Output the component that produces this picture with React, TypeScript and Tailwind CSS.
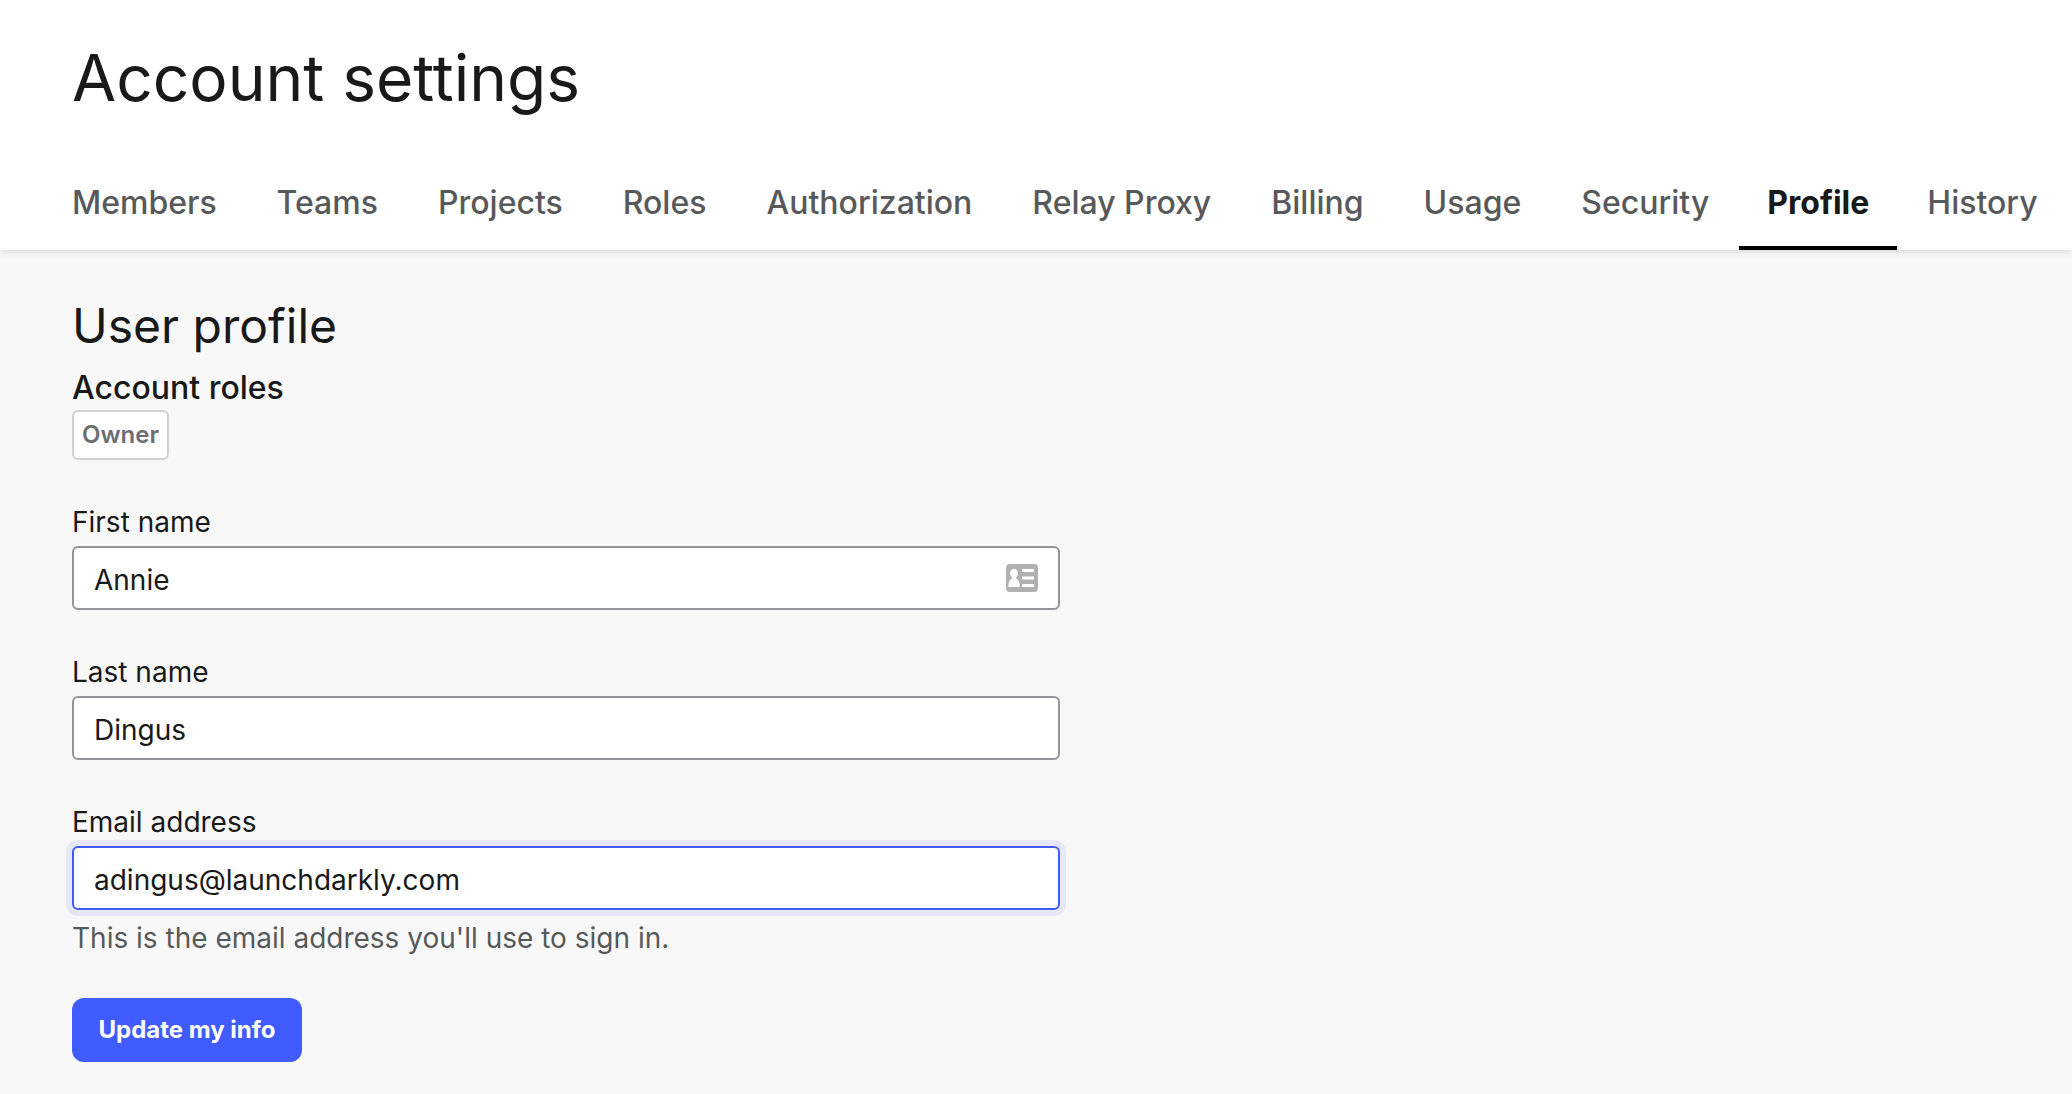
import React from "react";

const tabs = [
  "Members",
  "Teams",
  "Projects",
  "Roles",
  "Authorization",
  "Relay Proxy",
  "Billing",
  "Usage",
  "Security",
  "Profile",
  "History",
];
const currentTab = "Profile";

function ContactCardIcon() {
  return (
    <svg
      viewBox="0 0 32 28"
      className="pointer-events-none absolute inset-y-0 right-[22px] my-auto h-7 w-8"
      aria-hidden="true"
    >
      <rect width="32" height="28" rx="4" fill="#b1b1b1" />
      <ellipse cx="8" cy="9.500" rx="4" ry="4.700" fill="#fff" />
      <path d="M2.400 23C2.400 18.500 3.200 15.800 6 14.600V12.500H10V14.600C12.800 15.800 13.800 18.500 13.800 23Z" fill="#fff" />
      <path d="M16 5h12v3H16zM16 12.500h12v3H16zM16 20h12v3H16z" fill="#fff" />
    </svg>
  );
}

type FieldProps = {
  id: string;
  label: string;
  value: string;
  type?: string;
  active?: boolean;
  icon?: boolean;
};

function Field({ id, label, value, type = "text", active, icon }: FieldProps) {
  return (
    <div>
      <label htmlFor={id} className="block text-[28px] leading-9">
        {label}
      </label>
      <div className="relative mt-1.5">
        <input
          id={id}
          type={type}
          defaultValue={value}
          className={
            active
              ? "block h-16 w-full rounded-md border-2 border-[#405bff] bg-white px-5 pt-1 text-[28px] shadow-[0_0_0_6px_#e6e8f8] outline-none"
              : "block h-16 w-full rounded-md border-2 border-[#939399] bg-white px-5 pt-1 text-[28px] outline-none"
          }
        />
        {icon && <ContactCardIcon />}
      </div>
    </div>
  );
}

export default function App() {
  return (
    <div className="min-h-screen bg-[#f8f8f8] font-['Inter',sans-serif] text-[#191919]">
      <header className="bg-white pt-10 shadow-[0_2px_6px_rgba(0,0,0,0.12)]">
        <h1 className="px-18 text-[64px] leading-[76px]">Account settings</h1>
        <nav className="mt-9 flex pl-[42px]">
          {tabs.map((name) => (
            <a
              key={name}
              href="#"
              aria-current={name === currentTab ? "page" : undefined}
              className={
                name === currentTab
                  ? "flex h-[98px] shrink-0 items-center border-b-4 border-black px-7 pt-1 text-[32px] font-bold text-[#191919]"
                  : "flex h-[98px] shrink-0 items-center border-b-4 border-transparent px-[30px] pt-1 text-[32px] font-medium text-[#58595b]"
              }
            >
              <span className="pt-1">{name}</span>
            </a>
          ))}
        </nav>
      </header>
      <main className="px-18 pt-[46px]">
        <h2 className="text-[48px] leading-[60px]">User profile</h2>
        <h3 className="mt-3 text-[32px] font-medium leading-10">Account roles</h3>
        <div className="mt-0.5 flex h-[50px] w-fit items-center rounded-md border-2 border-[#d1d1d1] bg-white px-2 text-2xl font-semibold text-[#6d6e71]">
          Owner
        </div>
        <form className="mt-11 flex w-full max-w-[988px] flex-col gap-11">
          <Field id="first-name" label="First name" value="Annie" icon />
          <Field id="last-name" label="Last name" value="Dingus" />
          <div>
            <Field id="email" label="Email address" value="adingus@launchdarkly.com" type="email" active />
            <p className="mt-3 text-[28px] leading-8 text-[#58595b]">
              This is the email address you'll use to sign in.
            </p>
          </div>
          <button
            type="button"
            className="h-16 min-w-[230px] self-start rounded-xl bg-[#405bff] px-4 text-2xl font-bold text-white"
          >
            Update my info
          </button>
        </form>
      </main>
    </div>
  );
}
